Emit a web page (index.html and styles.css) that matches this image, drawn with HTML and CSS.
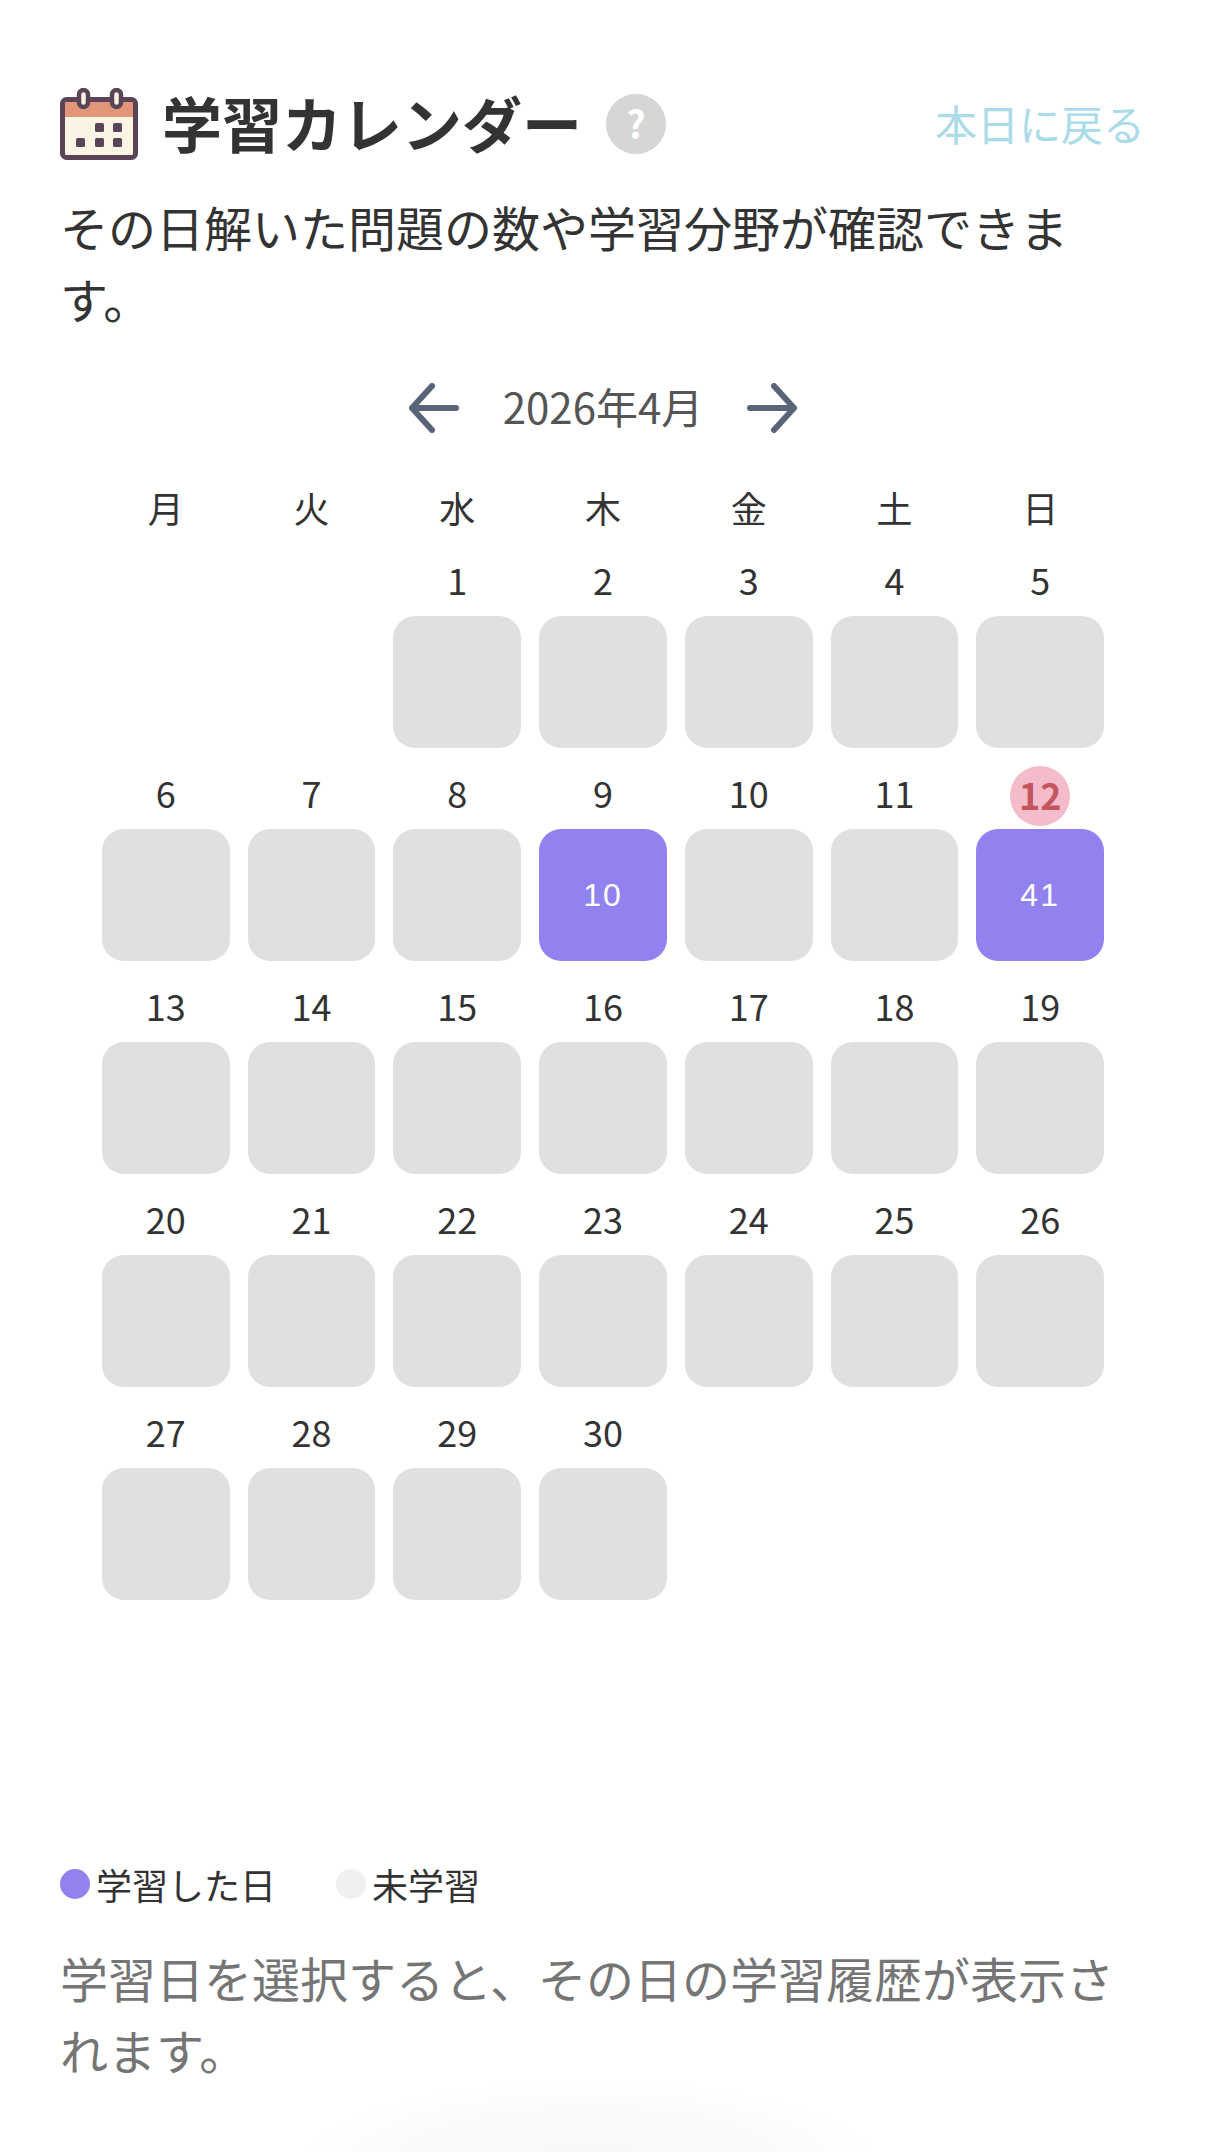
FILE: index.html
```html
<!DOCTYPE html>
<html lang="ja">

<head>
    <meta charset="UTF-8">
    <meta name="viewport" content="width=device-width, initial-scale=1.0">
    <title>学習カレンダー</title>
    <link rel="stylesheet" href="styles.css">
</head>

<body>
    <div class="page">
        <div class="header">
            <div class="title-group">
                <svg class="title-icon" viewBox="0 0 78 72" aria-hidden="true">
                    <rect x="2.5" y="11.5" width="73" height="58" rx="4" fill="#fbf3e4" stroke="#5a4558" stroke-width="5" />
                    <path d="M5 14h68v15H5z" fill="#e3957a" />
                    <rect x="19" y="2" width="9" height="17" rx="4.5" fill="#fbf3e4" stroke="#5a4558" stroke-width="4.5" />
                    <rect x="52" y="2" width="9" height="17" rx="4.5" fill="#fbf3e4" stroke="#5a4558" stroke-width="4.5" />
                    <g fill="#5a4558">
                        <rect x="35" y="35" width="9" height="9" rx="1.5" />
                        <rect x="53" y="35" width="9" height="9" rx="1.5" />
                        <rect x="16" y="50" width="9" height="9" rx="1.5" />
                        <rect x="35" y="50" width="9" height="9" rx="1.5" />
                        <rect x="53" y="50" width="9" height="9" rx="1.5" />
                    </g>
                </svg>
                <h2 class="title">学習カレンダー</h2>
                <span class="help">?</span>
            </div>
            <a class="today-link">本日に戻る</a>
        </div>

        <p class="desc">その日解いた問題の数や学習分野が確認できます。</p>

        <div class="month-nav">
            <svg class="arrow" viewBox="0 0 52 50" aria-hidden="true">
                <path d="M49 25H5M25 3 5 25l20 22" />
            </svg>
            <span class="month-label">2026年4月</span>
            <svg class="arrow" viewBox="0 0 52 50" aria-hidden="true">
                <path d="M3 25h44M27 3l20 22-20 22" />
            </svg>
        </div>

        <div class="calendar">
            <div class="weekday">月</div>
            <div class="weekday">火</div>
            <div class="weekday">水</div>
            <div class="weekday">木</div>
            <div class="weekday">金</div>
            <div class="weekday">土</div>
            <div class="weekday">日</div>

            <div class="day day-blank"></div>
            <div class="day day-blank"></div>
            <div class="day"><span class="num">1</span><div class="cell"></div></div>
            <div class="day"><span class="num">2</span><div class="cell"></div></div>
            <div class="day"><span class="num">3</span><div class="cell"></div></div>
            <div class="day"><span class="num">4</span><div class="cell"></div></div>
            <div class="day"><span class="num">5</span><div class="cell"></div></div>

            <div class="day"><span class="num">6</span><div class="cell"></div></div>
            <div class="day"><span class="num">7</span><div class="cell"></div></div>
            <div class="day"><span class="num">8</span><div class="cell"></div></div>
            <div class="day"><span class="num">9</span><div class="cell studied">10</div></div>
            <div class="day"><span class="num">10</span><div class="cell"></div></div>
            <div class="day"><span class="num">11</span><div class="cell"></div></div>
            <div class="day"><span class="num today">12</span><div class="cell studied">41</div></div>

            <div class="day"><span class="num">13</span><div class="cell"></div></div>
            <div class="day"><span class="num">14</span><div class="cell"></div></div>
            <div class="day"><span class="num">15</span><div class="cell"></div></div>
            <div class="day"><span class="num">16</span><div class="cell"></div></div>
            <div class="day"><span class="num">17</span><div class="cell"></div></div>
            <div class="day"><span class="num">18</span><div class="cell"></div></div>
            <div class="day"><span class="num">19</span><div class="cell"></div></div>

            <div class="day"><span class="num">20</span><div class="cell"></div></div>
            <div class="day"><span class="num">21</span><div class="cell"></div></div>
            <div class="day"><span class="num">22</span><div class="cell"></div></div>
            <div class="day"><span class="num">23</span><div class="cell"></div></div>
            <div class="day"><span class="num">24</span><div class="cell"></div></div>
            <div class="day"><span class="num">25</span><div class="cell"></div></div>
            <div class="day"><span class="num">26</span><div class="cell"></div></div>

            <div class="day"><span class="num">27</span><div class="cell"></div></div>
            <div class="day"><span class="num">28</span><div class="cell"></div></div>
            <div class="day"><span class="num">29</span><div class="cell"></div></div>
            <div class="day"><span class="num">30</span><div class="cell"></div></div>
        </div>

        <div class="legend">
            <div class="legend-item"><span class="dot dot-studied"></span>学習した日</div>
            <div class="legend-item"><span class="dot dot-none"></span>未学習</div>
        </div>

        <p class="hint">学習日を選択すると、その日の学習履歴が表示されます。</p>
    </div>
</body>

</html>
```

FILE: styles.css
```css
html,
body {
    margin: 0;
    height: 2152px;
    overflow: hidden;
    background: #fff;
}

body {
    font-family: "Noto Sans CJK JP", "Noto Sans", sans-serif;
    color: #333;
    position: relative;
}

body::after {
    content: '';
    position: absolute;
    left: 310px;
    bottom: -90px;
    width: 560px;
    height: 160px;
    background: radial-gradient(ellipse at center, #f8f8f8 0%, #fbfbfb 50%, #fff 72%);
}

.page {
    padding: 85px 60px 0;
}

.header {
    display: flex;
    justify-content: space-between;
    align-items: center;
    height: 80px;
    padding-right: 1px;
}

.title-group {
    display: flex;
    align-items: center;
}

.title-icon {
    width: 78px;
    height: 72px;
    margin-right: 24px;
    margin-bottom: 2px;
}

.title {
    margin: 0;
    padding-bottom: 6px;
    font-size: 60px;
    line-height: 80px;
    font-weight: 700;
    color: #333;
}

.help {
    width: 60px;
    height: 60px;
    margin-left: 24px;
    margin-bottom: 2px;
    border-radius: 50%;
    background: #d6d6d6;
    color: #fff;
    font-size: 38px;
    font-weight: 700;
    line-height: 58px;
    text-align: center;
}

.today-link {
    padding-bottom: 6px;
    font-size: 42px;
    color: #a9dbe8;
}

.desc {
    margin: 25px 0 0;
    width: 1040px;
    font-size: 48px;
    line-height: 72px;
    color: #333;
}

.month-nav {
    display: flex;
    justify-content: center;
    align-items: center;
    height: 60px;
    margin-top: 44px;
}

.arrow {
    width: 52px;
    height: 50px;
    fill: none;
    stroke: #5a6377;
    stroke-width: 6;
    stroke-linecap: round;
    stroke-linejoin: round;
}

.month-label {
    margin: 0 44px;
    padding-bottom: 6px;
    font-size: 42px;
    color: #555;
}

.calendar {
    display: grid;
    grid-template-columns: repeat(7, 1fr);
    column-gap: 18px;
    row-gap: 18px;
    width: 1002px;
    margin: 47px 0 0 42px;
}

.weekday {
    height: 50px;
    line-height: 44px;
    text-align: center;
    font-size: 36px;
    color: #333;
}

.day {
    display: flex;
    flex-direction: column;
    align-items: center;
}

.num {
    width: 60px;
    height: 60px;
    line-height: 52px;
    text-align: center;
    font-size: 36px;
    color: #333;
    margin-bottom: 3px;
}

.num.today {
    border-radius: 50%;
    background: #f4bccb;
    color: #c4555c;
    font-weight: 700;
    line-height: 56px;
}

.cell {
    width: 100%;
    height: 132px;
    border-radius: 22px;
    background: #e0e0e0;
}

.cell.studied {
    display: flex;
    justify-content: center;
    align-items: center;
    background: #9182ef;
    color: #fff;
    font-family: "Liberation Sans", Arial, sans-serif;
    font-size: 32px;
    letter-spacing: 2px;
}

.legend {
    display: flex;
    gap: 60px;
    margin-top: 264px;
    height: 40px;
}

.legend-item {
    display: flex;
    align-items: center;
    font-size: 36px;
    line-height: 40px;
    color: #333;
}

.dot {
    width: 30px;
    height: 30px;
    margin-right: 6px;
    border-radius: 50%;
}

.dot-studied {
    background: #9182ef;
}

.dot-none {
    background: #f0f0f0;
}

.hint {
    margin: 37px 0 0;
    width: 1060px;
    font-size: 48px;
    line-height: 72px;
    color: #757575;
}
```
